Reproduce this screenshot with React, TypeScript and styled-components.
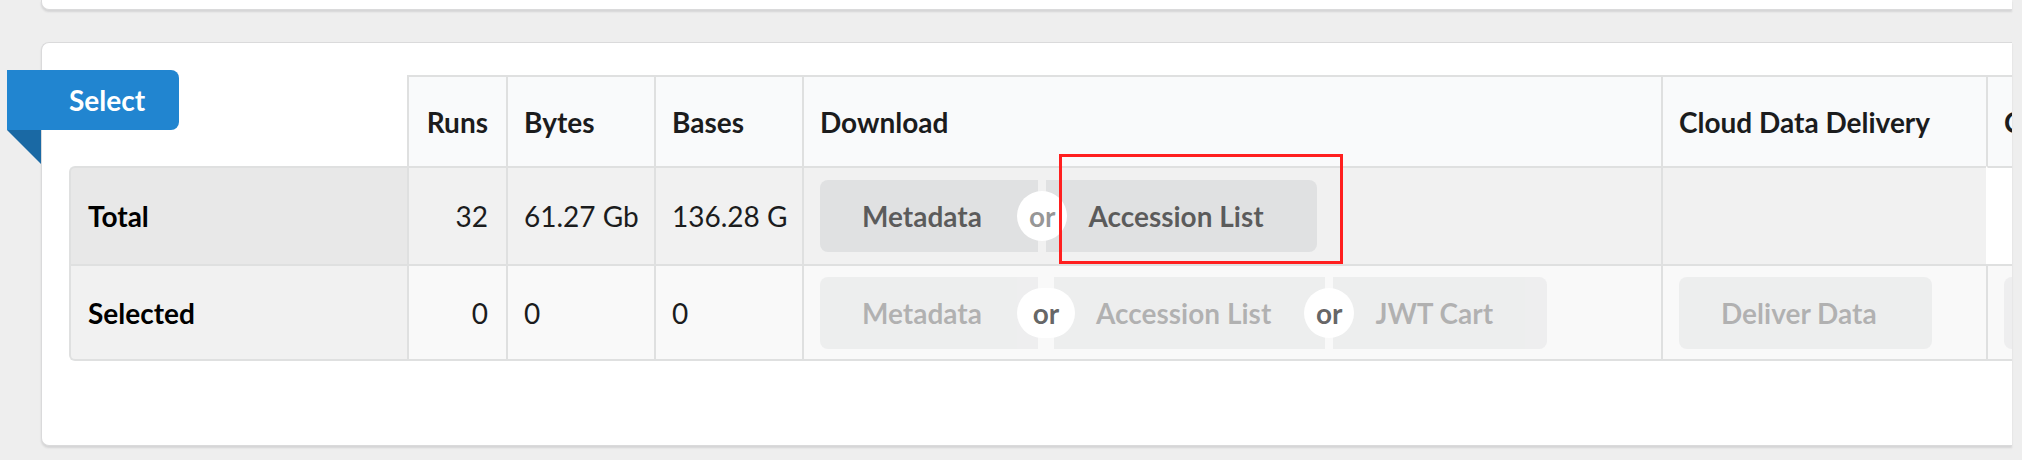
import React from 'react';
import styled, { createGlobalStyle, css } from 'styled-components';

const Global = createGlobalStyle`
  html, body { margin: 0; padding: 0; background: #eeeeee; }
  body {
    font-family: Lato, "Helvetica Neue", Arial, sans-serif;
    width: 2022px;
    height: 460px;
    overflow: hidden;
  }
  #root { height: 460px; }
`;

const Page = styled.div`
  display: flex;
  flex-direction: column;
  gap: 32px;
  padding: 0 10px 0 41px;
  height: 460px;
  box-sizing: border-box;
`;

const TopCard = styled.div`
  height: 9px;
  background: #fff;
  border: 1px solid #dadadb;
  border-top: none;
  border-right: none;
  border-radius: 0 0 0 8px;
  box-shadow: 0 2px 2px rgba(34, 36, 38, 0.12);
`;

const Card = styled.section`
  position: relative;
  height: 404px;
  box-sizing: border-box;
  background: #fff;
  border: 1px solid #dadadb;
  border-right: none;
  border-radius: 8px 0 0 8px;
  box-shadow: 0 2px 2px rgba(34, 36, 38, 0.12);
  padding: 32px 0 84px 27px;
`;

const Ribbon = styled.div`
  position: absolute;
  left: -35px;
  top: 27px;
  height: 60px;
  box-sizing: border-box;
  display: flex;
  align-items: center;
  padding: 0 34px 0 62px;
  background: #2185d0;
  color: #fff;
  font-size: 28px;
  font-weight: 700;
  border-radius: 0 8px 8px 0;
  z-index: 5;
  &::after {
    content: '';
    position: absolute;
    top: 100%;
    left: 0;
    width: 0;
    height: 0;
    border-style: solid;
    border-width: 0 34px 34px 0;
    border-color: transparent #1a69a4 transparent transparent;
  }
`;

const Clip = styled.div`
  overflow: hidden;
`;

const Grid = styled.div`
  display: grid;
  grid-template-columns: 338px 99px 148px 148px 859px 325px 300px;
  grid-template-rows: 91px 98px 97px;
  width: max-content;
`;

const lineColor = '#dfe0e0';

const BlankHead = styled.div`
  background: #fff;
`;

const HeadCell = styled.div<{ $right?: boolean }>`
  display: flex;
  align-items: center;
  justify-content: ${(p) => (p.$right ? 'flex-end' : 'flex-start')};
  box-sizing: border-box;
  padding: 0 18px 0 16px;
  background: #f9fafb;
  border-top: 2px solid ${lineColor};
  border-left: 2px solid ${lineColor};
  font-size: 28px;
  font-weight: 700;
  color: #1b1c1d;
  white-space: nowrap;
`;

const LabelCell = styled.div<{ $variant: 'total' | 'selected' }>`
  display: flex;
  align-items: center;
  box-sizing: border-box;
  padding: 0 17px;
  border-left: 2px solid ${lineColor};
  border-top: 2px solid ${lineColor};
  font-size: 28px;
  font-weight: 700;
  color: #000;
  ${(p) =>
    p.$variant === 'total'
      ? css`
          background: #e8e8e8;
          border-top-left-radius: 6px;
        `
      : css`
          background: #f1f1f1;
          border-bottom: 2px solid ${lineColor};
          border-bottom-left-radius: 6px;
        `}
`;

const DataCell = styled.div<{ $variant: 'total' | 'selected'; $right?: boolean; $plain?: boolean }>`
  position: relative;
  display: flex;
  align-items: center;
  justify-content: ${(p) => (p.$right ? 'flex-end' : 'flex-start')};
  box-sizing: border-box;
  padding: 0 18px 0 16px;
  border-top: 2px solid ${lineColor};
  border-left: 2px solid ${(p) => (p.$plain ? 'transparent' : lineColor)};
  background: ${(p) => (p.$plain ? '#fff' : p.$variant === 'total' ? '#f1f1f1' : '#f9f9f9')};
  ${(p) =>
    p.$variant === 'selected' &&
    css`
      border-bottom: 2px solid ${lineColor};
    `}
  font-size: 28px;
  color: #1b1c1d;
  white-space: nowrap;
  overflow: visible;
`;

const Buttons = styled.div`
  display: inline-flex;
  align-items: center;
`;

type Pos = 'first' | 'middle' | 'last' | 'solo';

const radiusFor = (pos: Pos) => {
  switch (pos) {
    case 'first':
      return '8px 0 0 8px';
    case 'middle':
      return '0';
    case 'last':
      return '0 8px 8px 0';
    default:
      return '8px';
  }
};

const Button = styled.button<{ $pos: Pos; $off?: boolean; $width: number }>`
  flex: none;
  box-sizing: border-box;
  width: ${(p) => p.$width}px;
  margin: 0;
  border: none;
  font-family: inherit;
  font-size: 28px;
  font-weight: 700;
  line-height: 28px;
  text-align: left;
  padding: 22px 0 22px 42px;
  background: #e0e1e2;
  color: rgba(0, 0, 0, 0.6);
  border-radius: ${(p) => radiusFor(p.$pos)};
  opacity: ${(p) => (p.$off ? 0.45 : 1)};
  white-space: nowrap;
  overflow: hidden;
  cursor: ${(p) => (p.$off ? 'default' : 'pointer')};
`;

const Or = styled.span<{ $wide?: boolean; $dark?: boolean }>`
  position: relative;
  flex: none;
  width: ${(p) => (p.$wide ? 16 : 8.4)}px;
  height: 72px;
  z-index: 3;
  &::before {
    content: 'or';
    position: absolute;
    top: 50%;
    left: 50%;
    width: ${(p) => (p.$wide ? 58 : 50)}px;
    height: 50px;
    margin-top: -25px;
    margin-left: ${(p) => (p.$wide ? -29 : -25)}px;
    border-radius: 25px;
    background: #fff;
    font-size: 28px;
    font-weight: 700;
    line-height: 50px;
    text-align: center;
    color: ${(p) => (p.$dark ? 'rgba(0,0,0,0.62)' : 'rgba(0,0,0,0.42)')};
  }
`;

const Highlight = styled.div`
  position: absolute;
  left: 255px;
  top: -14px;
  width: 284px;
  height: 110px;
  box-sizing: border-box;
  border: 3px solid #ff1f1f;
  pointer-events: none;
  z-index: 6;
`;

const headers: { label: string; right?: boolean }[] = [
  { label: 'Runs', right: true },
  { label: 'Bytes' },
  { label: 'Bases' },
  { label: 'Download' },
  { label: 'Cloud Data Delivery' },
  { label: 'Computing' },
];

export default function App() {
  return (
    <>
      <Global />
      <Page>
        <TopCard />
        <Card>
          <Ribbon>Select</Ribbon>
          <Clip>
            <Grid>
              <BlankHead />
              {headers.map((h) => (
                <HeadCell key={h.label} $right={h.right}>
                  {h.label}
                </HeadCell>
              ))}

              <LabelCell $variant="total">Total</LabelCell>
              <DataCell $variant="total" $right>
                32
              </DataCell>
              <DataCell $variant="total">61.27 Gb</DataCell>
              <DataCell $variant="total">136.28 G</DataCell>
              <DataCell $variant="total">
                <Buttons>
                  <Button $pos="first" $width={218}>Metadata</Button>
                  <Or />
                  <Button $pos="last" $width={271}>Accession List</Button>
                </Buttons>
                <Highlight />
              </DataCell>
              <DataCell $variant="total" />
              <DataCell $variant="total" $plain />

              <LabelCell $variant="selected">Selected</LabelCell>
              <DataCell $variant="selected" $right>
                0
              </DataCell>
              <DataCell $variant="selected">0</DataCell>
              <DataCell $variant="selected">0</DataCell>
              <DataCell $variant="selected">
                <Buttons>
                  <Button $pos="first" $off disabled $width={218}>
                    Metadata
                  </Button>
                  <Or $wide $dark />
                  <Button $pos="middle" $off disabled $width={271}>
                    Accession List
                  </Button>
                  <Or $dark />
                  <Button $pos="last" $off disabled $width={214}>
                    JWT Cart
                  </Button>
                </Buttons>
              </DataCell>
              <DataCell $variant="selected">
                <Button $pos="solo" $off disabled $width={253}>
                  Deliver Data
                </Button>
              </DataCell>
              <DataCell $variant="selected">
                <Button $pos="solo" $off disabled $width={220}>
                  Compute
                </Button>
              </DataCell>
            </Grid>
          </Clip>
        </Card>
      </Page>
    </>
  );
}
